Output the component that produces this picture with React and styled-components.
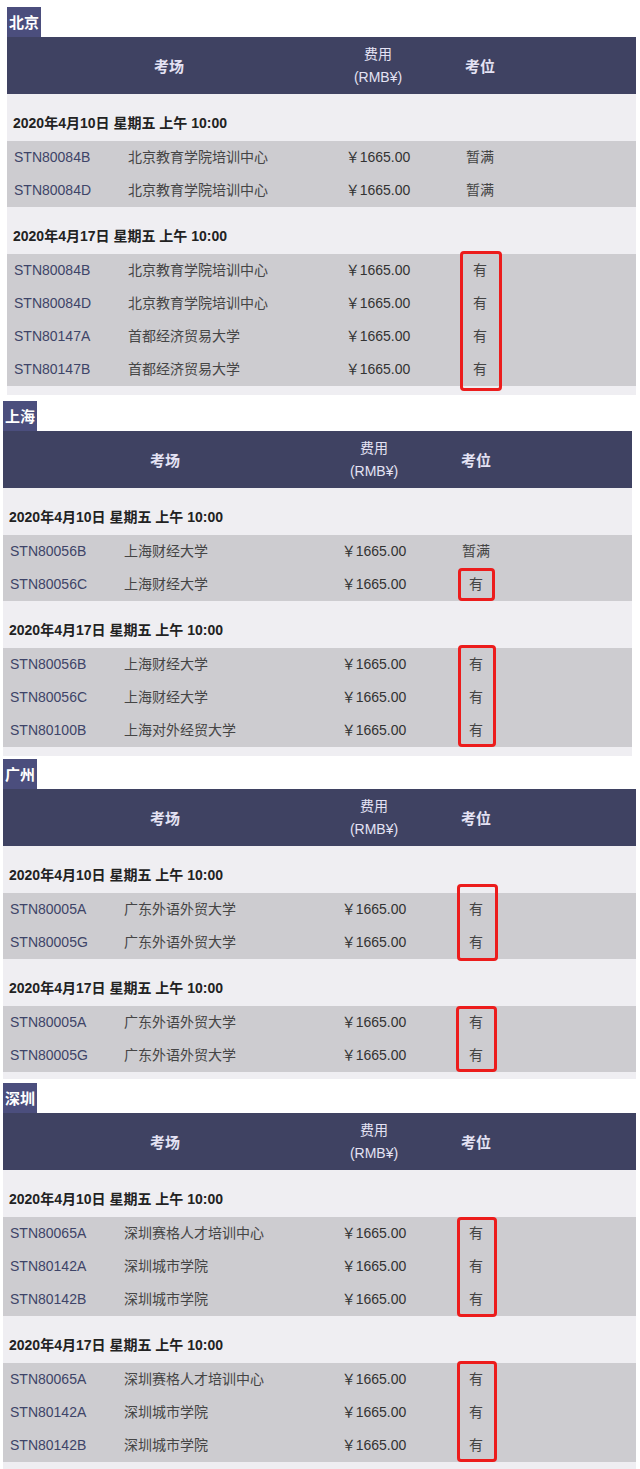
import React from "react";
import styled, { createGlobalStyle } from "styled-components";

const Global = createGlobalStyle`
  html, body { margin: 0; padding: 0; background: #ffffff; }
  body { font-family: "Liberation Sans", "Noto Sans CJK SC", Arial, sans-serif; }
`;

const COLS = "121px 203px 94px 110px 1fr";

const Page = styled.div`
  display: flex;
  flex-direction: column;
  width: 640px;
`;

const Section = styled.section`
  display: flex;
  flex-direction: column;
  margin: ${(p) => p.$top}px ${(p) => p.$right}px 0 ${(p) => p.$left}px;
`;

const Tab = styled.div`
  align-self: flex-start;
  height: 30px;
  line-height: 31px;
  padding: 0 2px;
  background: #4b4e7d;
  color: #ffffff;
  font-weight: bold;
  font-size: 15px;
`;

const Header = styled.div`
  display: grid;
  grid-template-columns: ${COLS};
  height: 57px;
  align-items: center;
  background: #3f4262;
  color: #e4e2f4;
  font-size: 14px;
  text-align: center;
`;

const HeadMain = styled.div`
  grid-column: 1 / 3;
  font-weight: bold;
  font-size: 15px;
`;

const HeadFee = styled.div`
  line-height: 23px;
`;

const HeadSeat = styled.div`
  font-weight: bold;
  font-size: 15px;
`;

const Body = styled.div`
  display: flex;
  flex-direction: column;
  background: #efeef2;
  padding-bottom: ${(p) => p.$bottom}px;
`;

const DateRow = styled.div`
  padding: 19px 0 8px 6px;
  line-height: 20px;
  font-size: 14px;
  font-weight: bold;
  color: #222222;
`;

const Band = styled.div`
  display: grid;
  grid-template-columns: ${COLS};
  grid-auto-rows: 33px;
  align-items: center;
  background: #cdccd0;
  font-size: 14px;
  line-height: 18px;
`;

const Cell = styled.div`
  grid-row: ${(p) => p.$r};
  grid-column: ${(p) => p.$c};
  white-space: nowrap;
  margin-top: -2px;
`;

const Code = styled(Cell)`
  padding-left: 7px;
  color: #3e4468;
`;

const Name = styled(Cell)`
  color: #454545;
`;

const Fee = styled(Cell)`
  text-align: center;
  color: #333333;
`;

const Seat = styled(Cell)`
  text-align: center;
  color: #444444;
`;

const RedBox = styled.div`
  grid-column: 4;
  grid-row: ${(p) => p.$start} / span ${(p) => p.$span};
  align-self: stretch;
  justify-self: center;
  width: ${(p) => p.$w}px;
  margin: -${(p) => p.$up}px 0 -${(p) => p.$down}px ${(p) => p.$shift}px;
  box-sizing: border-box;
  border: 3px solid #ec1c1c;
  border-radius: 4px;
  position: relative;
  z-index: 1;
`;

const DATE1 = "2020年4月10日 星期五 上午 10:00";
const DATE2 = "2020年4月17日 星期五 上午 10:00";

const data = [
  {
    city: "北京",
    top: 7, left: 7, right: 4, bottom: 9,
    groups: [
      {
        date: DATE1,
        rows: [
          ["STN80084B", "北京教育学院培训中心", "暂满"],
          ["STN80084D", "北京教育学院培训中心", "暂满"],
        ],
      },
      {
        date: DATE2,
        rows: [
          ["STN80084B", "北京教育学院培训中心", "有"],
          ["STN80084D", "北京教育学院培训中心", "有"],
          ["STN80147A", "首都经济贸易大学", "有"],
          ["STN80147B", "首都经济贸易大学", "有"],
        ],
        box: { start: 1, span: 4, up: 3, down: 5, w: 42, shift: 2 },
      },
    ],
  },
  {
    city: "上海",
    top: 6, left: 3, right: 8, bottom: 9,
    groups: [
      {
        date: DATE1,
        rows: [
          ["STN80056B", "上海财经大学", "暂满"],
          ["STN80056C", "上海财经大学", "有"],
        ],
        box: { start: 2, span: 1, up: 1, down: -2, w: 37, shift: 1 },
      },
      {
        date: DATE2,
        rows: [
          ["STN80056B", "上海财经大学", "有"],
          ["STN80056C", "上海财经大学", "有"],
          ["STN80100B", "上海对外经贸大学", "有"],
        ],
        box: { start: 1, span: 3, up: 3, down: 0, w: 38, shift: 1 },
      },
    ],
  },
  {
    city: "广州",
    top: 3, left: 3, right: 4, bottom: 7,
    groups: [
      {
        date: DATE1,
        rows: [
          ["STN80005A", "广东外语外贸大学", "有"],
          ["STN80005G", "广东外语外贸大学", "有"],
        ],
        box: { start: 1, span: 2, up: 9, down: 2, w: 41, shift: 2 },
      },
      {
        date: DATE2,
        rows: [
          ["STN80005A", "广东外语外贸大学", "有"],
          ["STN80005G", "广东外语外贸大学", "有"],
        ],
        box: { start: 1, span: 2, up: -1, down: 2, w: 41, shift: 2 },
      },
    ],
  },
  {
    city: "深圳",
    top: 4, left: 3, right: 4, bottom: 9,
    groups: [
      {
        date: DATE1,
        rows: [
          ["STN80065A", "深圳赛格人才培训中心", "有"],
          ["STN80142A", "深圳城市学院", "有"],
          ["STN80142B", "深圳城市学院", "有"],
        ],
        box: { start: 1, span: 3, up: 0, down: 1, w: 40, shift: 2 },
      },
      {
        date: DATE2,
        rows: [
          ["STN80065A", "深圳赛格人才培训中心", "有"],
          ["STN80142A", "深圳城市学院", "有"],
          ["STN80142B", "深圳城市学院", "有"],
        ],
        box: { start: 1, span: 3, up: 2, down: 0, w: 40, shift: 2 },
      },
    ],
  },
];

function Group({ group }) {
  return (
    <>
      <DateRow>{group.date}</DateRow>
      <Band>
        {group.rows.map(([code, name, seat], i) => (
          <React.Fragment key={code + i}>
            <Code $r={i + 1} $c={1}>{code}</Code>
            <Name $r={i + 1} $c={2}>{name}</Name>
            <Fee $r={i + 1} $c={3}>￥1665.00</Fee>
            <Seat $r={i + 1} $c={4}>{seat}</Seat>
          </React.Fragment>
        ))}
        {group.box && (
          <RedBox
            $start={group.box.start}
            $span={group.box.span}
            $up={group.box.up}
            $down={group.box.down}
            $w={group.box.w}
            $shift={group.box.shift}
          />
        )}
      </Band>
    </>
  );
}

export default function App() {
  return (
    <>
      <Global />
      <Page>
        {data.map((s) => (
          <Section key={s.city} $top={s.top} $left={s.left} $right={s.right}>
            <Tab>{s.city}</Tab>
            <Header>
              <HeadMain>考场</HeadMain>
              <HeadFee>
                费用
                <br />
                (RMB¥)
              </HeadFee>
              <HeadSeat>考位</HeadSeat>
            </Header>
            <Body $bottom={s.bottom}>
              {s.groups.map((g, i) => (
                <Group key={i} group={g} />
              ))}
            </Body>
          </Section>
        ))}
      </Page>
    </>
  );
}
